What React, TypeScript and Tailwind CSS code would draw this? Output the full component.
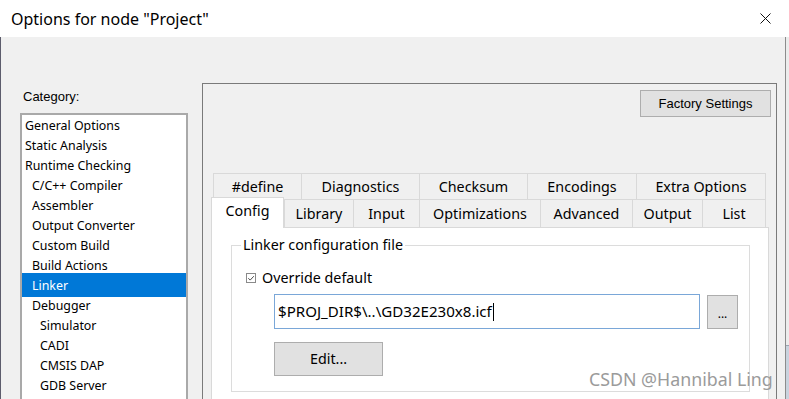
import React from 'react';

type Category = { label: string; level: 0 | 1 | 2; selected?: boolean };

const categories: Category[] = [
  { label: 'General Options', level: 0 },
  { label: 'Static Analysis', level: 0 },
  { label: 'Runtime Checking', level: 0 },
  { label: 'C/C++ Compiler', level: 1 },
  { label: 'Assembler', level: 1 },
  { label: 'Output Converter', level: 1 },
  { label: 'Custom Build', level: 1 },
  { label: 'Build Actions', level: 1 },
  { label: 'Linker', level: 1, selected: true },
  { label: 'Debugger', level: 1 },
  { label: 'Simulator', level: 2 },
  { label: 'CADI', level: 2 },
  { label: 'CMSIS DAP', level: 2 },
  { label: 'GDB Server', level: 2 },
];

// back row of the tab strip
const backTabs = [
  { label: '#define', w: 'w-[88px]' },
  { label: 'Diagnostics', w: 'w-[118px]' },
  { label: 'Checksum', w: 'w-[108px]' },
  { label: 'Encodings', w: 'w-[109px]' },
  { label: 'Extra Options', w: 'w-[130px]' },
];

// front row, Config (active) is drawn separately
const frontTabs = [
  { label: 'Library', w: 'w-[69px]' },
  { label: 'Input', w: 'w-[66px]' },
  { label: 'Optimizations', w: 'w-[121px]' },
  { label: 'Advanced', w: 'w-[92px]' },
  { label: 'Output', w: 'w-[70px]' },
  { label: 'List', w: 'w-[64px]' },
];

const indent = ['pl-[3px]', 'pl-[10px]', 'pl-[18px]'];

function CheckBox() {
  return (
    <svg width="11" height="11" viewBox="0 0 11 11" className="shrink-0">
      <rect x="0.5" y="0.5" width="9" height="9" fill="#fff" stroke="#8a8a8a" />
      <path d="M2.3 5.2 L4.2 7.1 L7.8 3.2" fill="none" stroke="#4d4d4d" strokeWidth="1" />
    </svg>
  );
}

export default function App() {
  return (
    <div className="relative w-[789px] h-[399px] overflow-hidden bg-[#f0f0f0] flex flex-col font-['Noto_Sans',sans-serif] text-black">
      {/* Title bar */}
      <div className="h-[37px] shrink-0 bg-white flex items-center justify-between pl-[11px] pr-[18px]">
        <span className="text-[16px] leading-[22px]">Options for node "Project"</span>
        <svg width="11" height="11" viewBox="0 0 11 11">
          <path d="M0.5 0.5 L10.5 10.5 M10.5 0.5 L0.5 10.5" stroke="#111" strokeWidth="1" />
        </svg>
      </div>

      {/* Body */}
      <div className="flex-1 flex min-h-0">
        <div className="w-px bg-[#5c5c6c]" />

        <div className="w-[784px] flex">
          {/* Category column */}
          <div className="ml-[19px] w-[168px] flex flex-col pt-[52px]">
            <span className="pl-[3px] h-[16px] leading-[16px] text-[13px] font-['Liberation_Sans',Arial,sans-serif]">
              Category:
            </span>
            <div className="mt-[8px] flex-1 bg-white border-2 border-b-0 border-[#a9a9a9] flex flex-col pt-px">
              {categories.map((c) => (
                <div
                  key={c.label}
                  className={
                    c.selected
                      ? `h-[24px] -mt-[3px] -mb-px pt-[3px] pb-px bg-[#0078d7] text-white text-[12.4px] leading-[20px] ${indent[c.level]}`
                      : `h-[20px] text-[12.4px] leading-[20px] ${indent[c.level]}`
                  }
                >
                  {c.label}
                </div>
              ))}
            </div>
          </div>

          {/* Options panel */}
          <div className="ml-[14px] mt-[46px] w-[575px] border border-b-0 border-[#7a7a7a] flex flex-col">
            <div className="flex justify-end pr-[5px] pt-[6px]">
              <button className="w-[131px] h-[27px] bg-[#e1e1e1] border border-[#adadad] text-[13px] font-['Liberation_Sans',Arial,sans-serif]">
                Factory Settings
              </button>
            </div>

            <div className="ml-[8px] mr-[7px] mt-[56px] flex-1 flex flex-col">
              {/* back tab row */}
              <div className="flex pl-[2px]">
                {backTabs.map((t, i) => (
                  <div
                    key={t.label}
                    className={`${t.w} h-[26px] border-t border-l border-[#d9d9d9] flex items-center justify-center text-[14.3px] ${
                      i === backTabs.length - 1 ? 'border-r' : ''
                    }`}
                  >
                    {t.label}
                  </div>
                ))}
              </div>
              {/* front tab row */}
              <div className="flex items-end h-[28px]">
                <div className="relative z-10 w-[73px] h-[31px] -mb-px bg-white border-t border-l border-r border-[#d9d9d9] flex items-center justify-center pb-[4px] text-[14.3px]">
                  Config
                </div>
                {frontTabs.map((t, i) => (
                  <div
                    key={t.label}
                    className={`${t.w} h-[28px] border-t border-l border-[#d9d9d9] flex items-center justify-center text-[14.3px] ${
                      i === frontTabs.length - 1 ? 'border-r' : ''
                    }`}
                  >
                    {t.label}
                  </div>
                ))}
              </div>

              {/* tab page */}
              <div className="flex-1 bg-white border border-b-0 border-[#d9d9d9] pt-[7px] pl-[19px] pr-[18px]">
                <fieldset className="border border-[#dcdcdc] pb-[15px]">
                  <legend className="ml-[9px] px-[2px] text-[14.3px] leading-[20px]">Linker configuration file</legend>
                  <div className="pt-[13px] pl-[14px] h-[33px] flex items-center gap-[5px] text-[14.3px]">
                    <CheckBox />
                    <span className="leading-[20px]">Override default</span>
                  </div>
                  <div className="ml-[42px] mt-[6px] flex items-center gap-[7px]">
                    <div className="w-[426px] h-[35px] border border-[#7aa7d8] bg-white flex items-center pl-[3px] text-[15.1px]">
                      <span>$PROJ_DIR$\..\GD32E230x8.icf</span>
                      <span className="w-px h-[18px] bg-black ml-px" />
                    </div>
                    <button className="w-[31px] h-[34px] bg-[#e1e1e1] border border-[#adadad] text-[12px] leading-none pt-[4px]">
                      ...
                    </button>
                  </div>
                  <div className="ml-[42px] mt-[13px]">
                    <button className="w-[109px] h-[34px] bg-[#e1e1e1] border border-[#adadad] text-[14.3px]">
                      Edit...
                    </button>
                  </div>
                </fieldset>
              </div>
            </div>
          </div>
        </div>

        <div className="w-px bg-[#8c8c8c]" />
        <div className="w-[3px] flex flex-col">
          <div className="flex-1 bg-[#ececec]" />
          <div className="h-[54px] border-t border-[#9aa4b0] bg-[#c9d3de]" />
        </div>
      </div>

      {/* watermark */}
      <span className="absolute left-[589px] top-[366px] leading-[26px] text-[17.8px] text-[#9b9b9b]">
        CSDN @Hannibal Ling
      </span>
    </div>
  );
}
